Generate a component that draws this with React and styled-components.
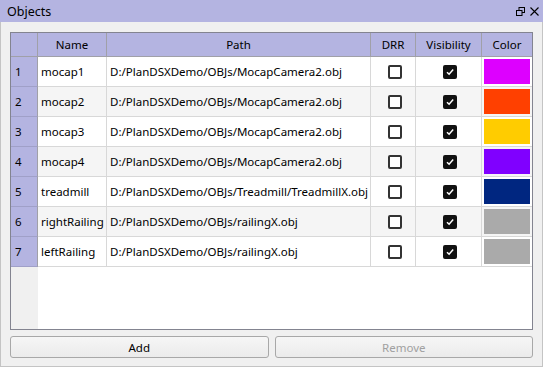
import React from 'react';
import styled, { createGlobalStyle } from 'styled-components';

const GlobalStyle = createGlobalStyle`
  html, body {
    margin: 0;
    padding: 0;
    background: #f0f0f0;
  }
  body {
    font-family: 'Noto Sans', 'DejaVu Sans', sans-serif;
    font-size: 11.5px;
    color: #000;
  }
`;

const LAVENDER = '#b4b4e1';

const Window = styled.div`
  width: 543px;
  height: 367px;
  display: flex;
  flex-direction: column;
  box-sizing: border-box;
`;

const TitleBar = styled.div`
  height: 22px;
  flex: none;
  background: ${LAVENDER};
  display: flex;
  align-items: center;
  justify-content: space-between;
  padding: 0 4px 0 7px;
`;

const Title = styled.span`
  font-size: 12.5px;
`;

const TitleButtons = styled.div`
  display: flex;
  align-items: center;
  gap: 5px;
`;

const Body = styled.div`
  flex: 1;
  display: flex;
  flex-direction: column;
  gap: 6px;
  padding: 10px 9px 8px;
  background: #f0f0f0;
  border: 1px solid #c4c4c4;
  border-top: none;
`;

const Frame = styled.div`
  height: 298px;
  box-sizing: border-box;
  border: 1px solid #838490;
  background: #fff;
  display: grid;
  grid-template-columns: 27px 69px 264px 45px 66px 50px;
  grid-template-rows: 24px repeat(7, 30px) 1fr;
`;

const HeadCell = styled.div`
  box-sizing: border-box;
  background: ${LAVENDER};
  border-right: ${(p) => (p.$last ? 'none' : '1px solid #a0a0a8')};
  border-bottom: 1px solid #a0a0a8;
  display: flex;
  align-items: center;
  justify-content: center;
`;

const RowHead = styled.div`
  box-sizing: border-box;
  background: ${LAVENDER};
  border-right: 1px solid #a0a0a8;
  border-bottom: 1px solid #a0a0c8;
  display: flex;
  align-items: center;
  padding-left: 4px;
`;

const Cell = styled.div`
  box-sizing: border-box;
  background: ${(p) => (p.$alt ? '#f5f5f5' : '#fff')};
  border-right: ${(p) => (p.$last ? 'none' : '1px solid #d8d8d8')};
  border-bottom: 1px solid #d8d8d8;
  display: flex;
  align-items: center;
  justify-content: ${(p) => (p.$center ? 'center' : 'flex-start')};
  padding: ${(p) => (p.$swatch ? '2px' : '0 0 0 3px')};
  white-space: nowrap;
  overflow: hidden;
`;

const Swatch = styled.div`
  width: 100%;
  height: 100%;
  background: ${(p) => p.$color};
`;

const Box = styled.span`
  width: 14px;
  height: 14px;
  box-sizing: border-box;
  border-radius: 2px;
  border: 2px solid ${(p) => (p.$checked ? '#111' : '#333')};
  background: ${(p) => (p.$checked ? '#111' : '#fff')};
  display: flex;
  align-items: center;
  justify-content: center;
`;

const FillerHead = styled.div`
  background: #f0f0f0;
`;

const FillerBody = styled.div`
  grid-column: 2 / -1;
  background: #fff;
`;

const ButtonRow = styled.div`
  display: flex;
  gap: 6px;
`;

const Button = styled.button`
  flex: 1;
  height: 22px;
  border: 1px solid #a8a8a8;
  border-radius: 3px;
  background: linear-gradient(#f6f6f6, #ebebeb);
  font-family: inherit;
  font-size: 11.5px;
  color: ${(p) => (p.disabled ? '#a0a0a0' : '#000')};
  padding: 0;
`;

const rows = [
  { name: 'mocap1', path: 'D:/PlanDSXDemo/OBJs/MocapCamera2.obj', color: '#dd00ff' },
  { name: 'mocap2', path: 'D:/PlanDSXDemo/OBJs/MocapCamera2.obj', color: '#ff4000' },
  { name: 'mocap3', path: 'D:/PlanDSXDemo/OBJs/MocapCamera2.obj', color: '#ffcc00' },
  { name: 'mocap4', path: 'D:/PlanDSXDemo/OBJs/MocapCamera2.obj', color: '#8000ff' },
  { name: 'treadmill', path: 'D:/PlanDSXDemo/OBJs/Treadmill/TreadmillX.obj', color: '#002680' },
  { name: 'rightRailing', path: 'D:/PlanDSXDemo/OBJs/railingX.obj', color: '#aaaaaa' },
  { name: 'leftRailing', path: 'D:/PlanDSXDemo/OBJs/railingX.obj', color: '#aaaaaa' },
];

const Checkbox = ({ checked }) => (
  <Box $checked={checked}>
    {checked && (
      <svg width="10" height="10" viewBox="0 0 10 10">
        <path d="M2 5.2 L4.1 7.2 L8.2 2.6" fill="none" stroke="#fff" strokeWidth="1.5" />
      </svg>
    )}
  </Box>
);

const FloatIcon = () => (
  <svg width="9" height="9" viewBox="0 0 9 9">
    <rect x="3" y="0.5" width="5.5" height="5" fill="none" stroke="#000" strokeWidth="1" />
    <rect x="0.5" y="3.5" width="5.5" height="5" fill={LAVENDER} stroke="#000" strokeWidth="1" />
  </svg>
);

const CloseIcon = () => (
  <svg width="9" height="9" viewBox="0 0 9 9">
    <path d="M0.5 0.5 L8.5 8.5 M8.5 0.5 L0.5 8.5" stroke="#000" strokeWidth="1.1" />
  </svg>
);

const App = () => (
  <Window>
    <GlobalStyle />
    <TitleBar>
      <Title>Objects</Title>
      <TitleButtons>
        <FloatIcon />
        <CloseIcon />
      </TitleButtons>
    </TitleBar>
    <Body>
      <Frame>
        <HeadCell />
        <HeadCell>Name</HeadCell>
        <HeadCell>Path</HeadCell>
        <HeadCell>DRR</HeadCell>
        <HeadCell>Visibility</HeadCell>
        <HeadCell $last>Color</HeadCell>
        {rows.map((row, i) => {
          const alt = i % 2 === 1;
          return (
            <React.Fragment key={row.name}>
              <RowHead>{i + 1}</RowHead>
              <Cell $alt={alt}>{row.name}</Cell>
              <Cell $alt={alt}>{row.path}</Cell>
              <Cell $alt={alt} $center>
                <Checkbox />
              </Cell>
              <Cell $alt={alt} $center>
                <Checkbox checked />
              </Cell>
              <Cell $alt={alt} $swatch $last>
                <Swatch $color={row.color} />
              </Cell>
            </React.Fragment>
          );
        })}
        <FillerHead />
        <FillerBody />
      </Frame>
      <ButtonRow>
        <Button>Add</Button>
        <Button disabled>Remove</Button>
      </ButtonRow>
    </Body>
  </Window>
);

export default App;
